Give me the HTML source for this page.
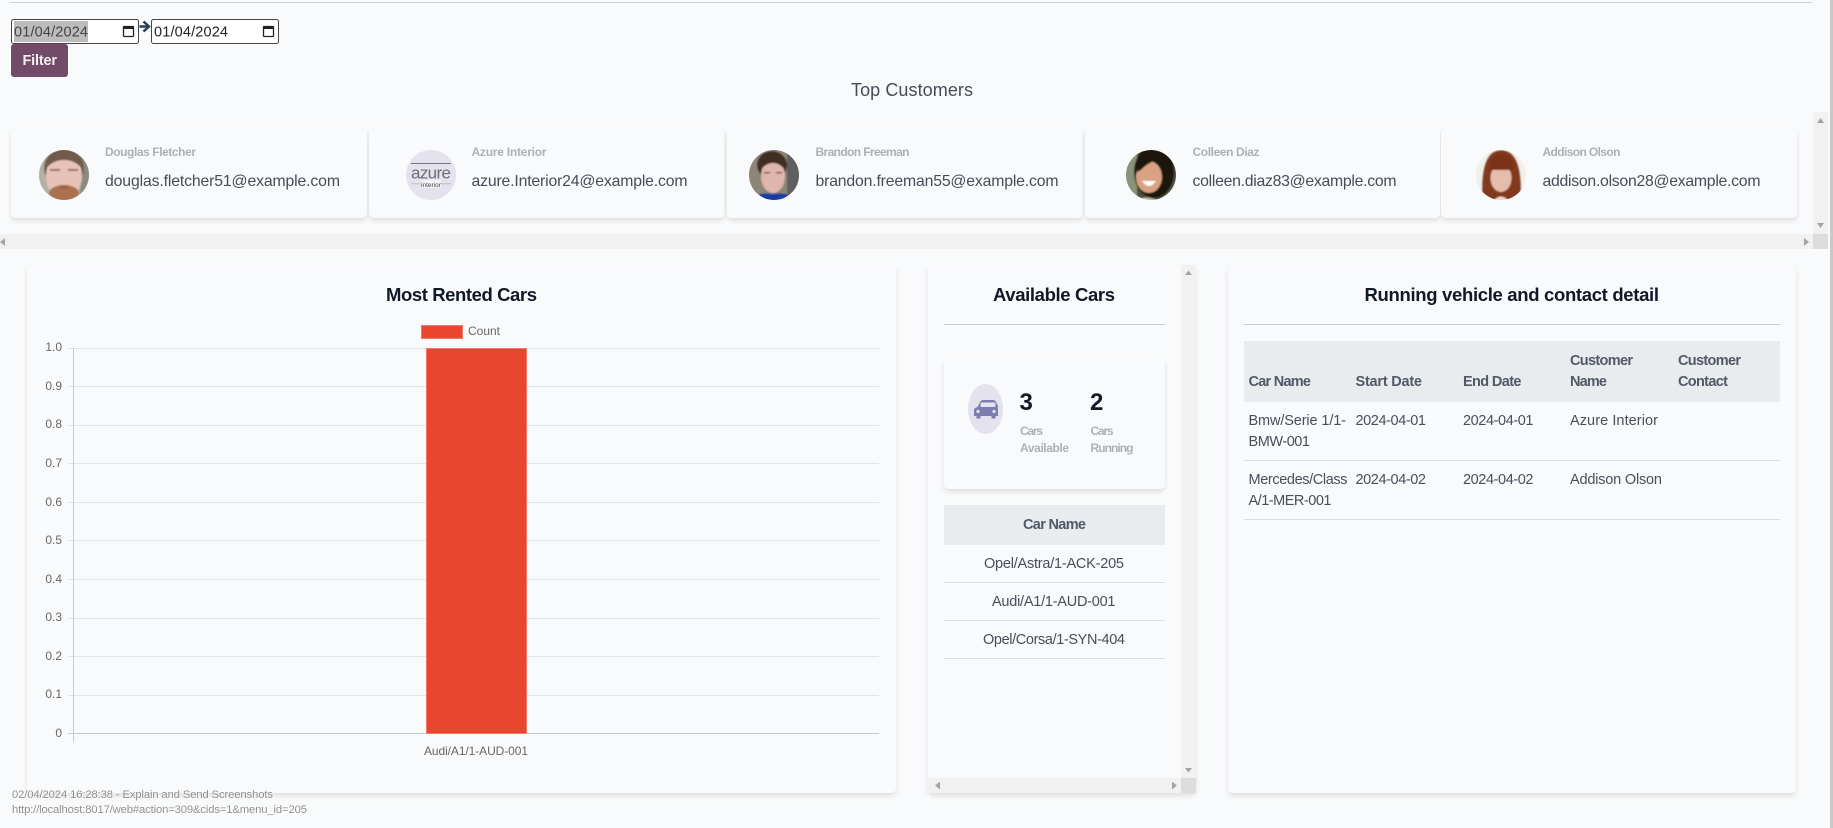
<!DOCTYPE html>
<html lang="en"><head><meta charset="utf-8"><title>Dashboard</title>
<style>
html,body{margin:0;padding:0;width:1833px;height:828px;overflow:hidden;background:#f9fafb}
svg{display:block;position:absolute;left:0;top:0}
text{font-family:"Liberation Sans",sans-serif}
.nm{font-size:12px;font-weight:700;fill:#aeb0b2}
.em{font-size:15.8px;fill:#464c58}
.ti{font-size:18.5px;font-weight:700;fill:#111827}
.ax{font-size:12px;fill:#666}
.th{font-size:14.5px;font-weight:700;fill:#525966}
.td{font-size:14.5px;fill:#484f5b}
.ft{font-size:11.3px;fill:#8d8d8d}
.gl{stroke:#e3e4e7;stroke-width:1}
.tri{fill:#a3a3a3}
.av{filter:url(#bl)}
</style></head>
<body>
<svg width="1833" height="828" viewBox="0 0 1833 828" xmlns="http://www.w3.org/2000/svg">
<defs>
<filter id="sh" x="-10%" y="-10%" width="120%" height="125%"><feDropShadow dx="0" dy="3" stdDeviation="2.500" flood-color="#000" flood-opacity=".1"/></filter>
<filter id="bl" x="-5%" y="-5%" width="110%" height="110%"><feGaussianBlur stdDeviation=".8"/></filter>
<filter id="wh" x="-2%" y="-20%" width="104%" height="150%"><feDropShadow dx=".8" dy=".6" stdDeviation=".1" flood-color="#fff" flood-opacity="1"/></filter>
<clipPath id="c1"><circle cx="64" cy="175" r="25"/></clipPath>
<clipPath id="c3"><circle cx="774" cy="175" r="25"/></clipPath>
<clipPath id="c4"><circle cx="1151" cy="175" r="25"/></clipPath>
<clipPath id="c5"><circle cx="1501" cy="175" r="25"/></clipPath>
</defs>
<rect width="1833" height="828" fill="#f9fafb"/>
<rect x="1830" y="0" width="3" height="828" fill="#c8c8c8"/>
<rect x="10" y="2" width="1802" height="1" fill="#cdd0d4"/>

<!-- date inputs -->
<rect x="11.500" y="19.500" width="127" height="24" rx="2" fill="#fff" stroke="#444"/>
<rect x="14" y="21" width="74" height="21" fill="#bcbcbc"/>
<text x="14" y="36.500" font-size="14.500" fill="#444" textLength="74">01/04/2024</text>
<g fill="none" stroke="#222"><rect x="123.500" y="26.500" width="10" height="10" rx="1" stroke-width="1.300"/><rect x="123" y="26" width="11" height="3" fill="#222" stroke="none"/></g>
<path d="M139.500 26.500H147M143.500 21.500L149 26.500L143.500 31.500" fill="none" stroke="#2c3e50" stroke-width="2.500"/>
<rect x="151.500" y="19.500" width="127" height="24" rx="2" fill="#fff" stroke="#444"/>
<text x="154" y="36.500" font-size="14.500" fill="#222" textLength="74">01/04/2024</text>
<g fill="none" stroke="#222"><rect x="263.500" y="26.500" width="10" height="10" rx="1" stroke-width="1.300"/><rect x="263" y="26" width="11" height="3" fill="#222" stroke="none"/></g>
<rect x="11" y="44" width="57" height="33" rx="3" fill="#714b67"/>
<text x="22.500" y="65" font-size="14.500" font-weight="700" fill="#f4eff3" textLength="34.500">Filter</text>

<text x="851" y="96" font-size="18" fill="#464c58" textLength="122">Top Customers</text>

<!-- cards -->
<g fill="#f9fafb" filter="url(#sh)">
<rect x="11" y="128" width="356" height="90" rx="5"/>
<rect x="369" y="128" width="355" height="90" rx="5"/>
<rect x="727" y="128" width="355.500" height="90" rx="5"/>
<rect x="1085" y="128" width="355" height="90" rx="5"/>
<rect x="1441" y="128" width="356" height="90" rx="5"/>
</g>

<!-- avatar 1 -->
<g clip-path="url(#c1)"><g class="av">
<rect x="37" y="148" width="54" height="54" fill="#b4b0a6"/>
<rect x="80" y="148" width="11" height="54" fill="#8d897f"/>
<ellipse cx="64" cy="168" rx="20" ry="19" fill="#6f5a4c"/>
<ellipse cx="64" cy="176" rx="18" ry="24" fill="#e6c3b6"/>
<ellipse cx="64" cy="193" rx="15" ry="8" fill="#a9714f"/>
<rect x="50" y="169" width="10" height="2" fill="#8a7263"/><rect x="68" y="169" width="10" height="2" fill="#8a7263"/>
<rect x="60" y="186" width="8" height="2.500" fill="#9b5d42"/>
<path d="M45 170Q46 151 64 152Q82 151 83 170Q76 160 64 160Q52 160 45 170Z" fill="#6f5a4c"/>
</g></g>
<!-- avatar 2 -->
<circle cx="431" cy="175" r="25" fill="#e4e2ec"/>
<rect x="411" y="163" width="40" height="1" fill="#77757d"/>
<text x="431" y="178.500" font-size="17" fill="#6f6d75" text-anchor="middle" textLength="40">azure</text>
<rect x="411" y="183.500" width="40" height=".7" fill="#b0aeb6"/>
<rect x="421" y="180" width="20" height="8" fill="#f4f4f6"/>
<text x="431" y="187" font-size="6.500" fill="#444" text-anchor="middle">interior</text>
<!-- avatar 3 -->
<g clip-path="url(#c3)"><g class="av">
<rect x="747" y="148" width="54" height="54" fill="#8d8578"/>
<rect x="787" y="148" width="14" height="54" fill="#5f5f5f"/>
<ellipse cx="772" cy="165" rx="15" ry="14" fill="#3f2e24"/>
<ellipse cx="773" cy="176" rx="12" ry="17" fill="#dfb6ad"/>
<path d="M759 172Q758 154 773 156Q787 154 786 172Q781 163 773 163Q765 163 759 172Z" fill="#3f2e24"/>
<rect x="764" y="172" width="6" height="1.500" fill="#6b5046"/><rect x="776" y="172" width="6" height="1.500" fill="#6b5046"/>
<path d="M750 202Q756 191 773 194Q790 191 796 202Z" fill="#1f3aa0"/>
</g></g>
<!-- avatar 4 -->
<g clip-path="url(#c4)"><g class="av">
<rect x="1124" y="148" width="54" height="54" fill="#4d5140"/>
<rect x="1124" y="148" width="13" height="54" fill="#8a9278"/>
<ellipse cx="1154" cy="172" rx="20" ry="26" fill="#1e1411"/>
<ellipse cx="1149" cy="177" rx="13" ry="16" fill="#d8a283"/>
<path d="M1137 172Q1140 158 1156 160Q1146 164 1141 170Z" fill="#1e1411"/>
<path d="M1142 181Q1149 191 1156 181Z" fill="#fff"/>
<path d="M1134 202Q1146 193 1160 202Z" fill="#cbb89e"/>
</g></g>
<!-- avatar 5 -->
<g clip-path="url(#c5)"><g class="av">
<rect x="1474" y="148" width="54" height="54" fill="#f3efe9"/>
<path d="M1482 194Q1481 150 1501 150Q1522 150 1521 194Q1514 202 1500 202Q1488 202 1482 194Z" fill="#813a1f"/>
<ellipse cx="1501" cy="178" rx="10.500" ry="14" fill="#e6bcab"/>
<path d="M1489 170Q1490 154 1501 154Q1513 154 1513 170Z" fill="#7c3219"/>
<path d="M1493 202Q1500 191 1510 202Z" fill="#ecd6c8"/>
</g></g>

<text class="nm" x="105" y="156" textLength="91">Douglas Fletcher</text>
<text class="em" x="105" y="186" textLength="235">douglas.fletcher51@example.com</text>
<text class="nm" x="471.500" y="156" textLength="75">Azure Interior</text>
<text class="em" x="471.500" y="186" textLength="216">azure.Interior24@example.com</text>
<text class="nm" x="815.500" y="156" textLength="94">Brandon Freeman</text>
<text class="em" x="815.500" y="186" textLength="243">brandon.freeman55@example.com</text>
<text class="nm" x="1192.500" y="156" textLength="67">Colleen Diaz</text>
<text class="em" x="1192.500" y="186" textLength="204">colleen.diaz83@example.com</text>
<text class="nm" x="1542.500" y="156" textLength="78">Addison Olson</text>
<text class="em" x="1542.500" y="186" textLength="218">addison.olson28@example.com</text>

<!-- customer scrollbars -->
<rect x="0" y="234" width="1813" height="15" fill="#f1f1f1"/>
<rect x="1813" y="112" width="15" height="122" fill="#f1f1f1"/>
<rect x="1813" y="234" width="15" height="15" fill="#dcdcdc"/>
<path class="tri" d="M1820.500 118L1824 123H1817Z"/>
<path class="tri" d="M1817 223H1824L1820.500 228Z"/>
<path class="tri" d="M5 238L0 242L5 246Z"/>
<path class="tri" d="M1804 238L1809 242L1804 246Z"/>

<!-- panels -->
<g fill="#f9fafb" filter="url(#sh)">
<rect x="27" y="265" width="869" height="528" rx="5"/>
<rect x="928" y="265" width="268" height="528" rx="5"/>
<rect x="1228" y="265" width="568" height="528" rx="5"/>
</g>

<!-- chart panel -->
<text class="ti" x="386" y="301" textLength="151">Most Rented Cars</text>
<rect x="421.500" y="325.500" width="41" height="13" fill="#ea452f" stroke="#ee7a6a"/>
<text class="ax" x="468" y="335" textLength="32">Count</text>
<g class="gl">
<line x1="68" x2="879" y1="348.500" y2="348.500"/><line x1="68" x2="879" y1="386.500" y2="386.500"/><line x1="68" x2="879" y1="425.500" y2="425.500"/><line x1="68" x2="879" y1="463.500" y2="463.500"/><line x1="68" x2="879" y1="502.500" y2="502.500"/><line x1="68" x2="879" y1="540.500" y2="540.500"/><line x1="68" x2="879" y1="579.500" y2="579.500"/><line x1="68" x2="879" y1="618.500" y2="618.500"/><line x1="68" x2="879" y1="656.500" y2="656.500"/><line x1="68" x2="879" y1="695.500" y2="695.500"/>
</g>
<line x1="68" x2="879" y1="733.500" y2="733.500" stroke="#c8cacd"/>
<line x1="73.500" x2="73.500" y1="348" y2="742" stroke="#c8cacd"/>
<g class="ax" text-anchor="end">
<text x="62" y="351">1.0</text><text x="62" y="390">0.9</text><text x="62" y="428">0.8</text><text x="62" y="467">0.7</text><text x="62" y="506">0.6</text><text x="62" y="544">0.5</text><text x="62" y="583">0.4</text><text x="62" y="621">0.3</text><text x="62" y="660">0.2</text><text x="62" y="698">0.1</text><text x="62" y="737">0</text>
</g>
<rect x="426.500" y="348.500" width="100" height="385" fill="#e9462f" stroke="#ee7a6a"/>
<text class="ax" x="424" y="755" textLength="104">Audi/A1/1-AUD-001</text>

<!-- available panel -->
<text class="ti" x="993" y="301" textLength="122">Available Cars</text>
<rect x="944" y="324" width="221" height="1" fill="#c9ccd0"/>
<rect x="944" y="358" width="221" height="131" rx="5" fill="#f9fafb" filter="url(#sh)"/>
<ellipse cx="985.500" cy="409" rx="17.500" ry="25" fill="#e4e2ec"/>
<path d="M977.500 407L980 402Q981 400 983.500 400H988H992.500Q995 400 996 402L998.500 407Q997.500 407 997.500 407Q997.500 407 997.500 407Q998 408 998 410V416H995.500V418.500H991.500V416H980.500V418.500H976.500V416H974V410Q974 408 977.500 407Z" fill="#7b7db0"/>
<rect x="980.500" y="402.500" width="15" height="4.500" rx="1" fill="#e4e2ec"/>
<circle cx="978" cy="411.500" r="1.600" fill="#e4e2ec"/><circle cx="994" cy="411.500" r="1.600" fill="#e4e2ec"/>
<text x="1019.500" y="410" font-size="24" font-weight="700" fill="#111827">3</text>
<text x="1090" y="410" font-size="24" font-weight="700" fill="#111827">2</text>
<text class="nm" x="1020" y="435" textLength="23">Cars</text>
<text class="nm" x="1020" y="452" textLength="49">Available</text>
<text class="nm" x="1090.500" y="435" textLength="23">Cars</text>
<text class="nm" x="1090.500" y="452" textLength="43">Running</text>
<rect x="944" y="505" width="221" height="40" fill="#e9ecef"/>
<text class="th" x="1023" y="529" textLength="63">Car Name</text>
<text class="td" x="984" y="568" textLength="140">Opel/Astra/1-ACK-205</text>
<rect x="944" y="582" width="221" height="1" fill="#dcdee2"/>
<text class="td" x="992" y="606" textLength="123.500">Audi/A1/1-AUD-001</text>
<rect x="944" y="620" width="221" height="1" fill="#dcdee2"/>
<text class="td" x="983" y="644" textLength="142">Opel/Corsa/1-SYN-404</text>
<rect x="944" y="658" width="221" height="1" fill="#dcdee2"/>
<rect x="1181" y="265" width="15" height="513" fill="#f1f1f1"/>
<rect x="928" y="778" width="253" height="15" fill="#f1f1f1"/>
<rect x="1181" y="778" width="15" height="15" fill="#dcdcdc"/>
<path class="tri" d="M1188.500 270.500L1192 275H1185Z"/>
<path class="tri" d="M1185 768H1192L1188.500 772.500Z"/>
<path class="tri" d="M940 781.500L935 785.500L940 789.500Z"/>
<path class="tri" d="M1172 781.500L1177 785.500L1172 789.500Z"/>

<!-- running panel -->
<text class="ti" x="1364.500" y="301" textLength="294.500">Running vehicle and contact detail</text>
<rect x="1244" y="324" width="536" height="1" fill="#c9ccd0"/>
<rect x="1244" y="341" width="536" height="61" fill="#e9ecef"/>
<text class="th" x="1248.500" y="386" textLength="62.500">Car Name</text>
<text class="th" x="1355.500" y="386" textLength="66.500">Start Date</text>
<text class="th" x="1463" y="386" textLength="58.500">End Date</text>
<text class="th" x="1570" y="365" textLength="63">Customer</text>
<text class="th" x="1570" y="386" textLength="37">Name</text>
<text class="th" x="1678" y="365" textLength="63">Customer</text>
<text class="th" x="1678" y="386" textLength="50">Contact</text>
<text class="td" x="1248.500" y="425" textLength="97.500">Bmw/Serie 1/1-</text>
<text class="td" x="1248.500" y="446" textLength="61.500">BMW-001</text>
<text class="td" x="1355.500" y="425" textLength="70.500">2024-04-01</text>
<text class="td" x="1463" y="425" textLength="70.500">2024-04-01</text>
<text class="td" x="1570" y="425" textLength="88">Azure Interior</text>
<rect x="1244" y="460" width="536" height="1" fill="#dcdee2"/>
<text class="td" x="1248.500" y="484" textLength="99">Mercedes/Class</text>
<text class="td" x="1248.500" y="505" textLength="83">A/1-MER-001</text>
<text class="td" x="1355.500" y="484" textLength="70.500">2024-04-02</text>
<text class="td" x="1463" y="484" textLength="70.500">2024-04-02</text>
<text class="td" x="1570" y="484" textLength="92">Addison Olson</text>
<rect x="1244" y="519" width="536" height="1" fill="#dcdee2"/>

<!-- footer overlay -->
<text class="ft" x="12" y="798" textLength="261" filter="url(#wh)">02/04/2024 16:28:38 - Explain and Send Screenshots</text>
<text class="ft" x="12" y="813" textLength="295" filter="url(#wh)">http://localhost:8017/web#action=309&amp;cids=1&amp;menu_id=205</text>
</svg>
</body></html>
